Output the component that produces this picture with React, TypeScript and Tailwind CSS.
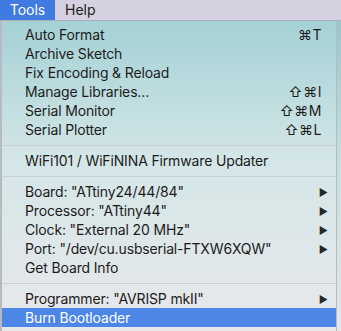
import React from 'react';

type Item =
  | { kind: 'item'; label: string; shortcut?: string; submenu?: boolean; active?: boolean }
  | { kind: 'sep' };

const items: Item[] = [
  { kind: 'item', label: 'Auto Format', shortcut: '⌘T' },
  { kind: 'item', label: 'Archive Sketch' },
  { kind: 'item', label: 'Fix Encoding & Reload' },
  { kind: 'item', label: 'Manage Libraries...', shortcut: '⇧⌘I' },
  { kind: 'item', label: 'Serial Monitor', shortcut: '⇧⌘M' },
  { kind: 'item', label: 'Serial Plotter', shortcut: '⇧⌘L' },
  { kind: 'sep' },
  { kind: 'item', label: 'WiFi101 / WiFiNINA Firmware Updater' },
  { kind: 'sep' },
  { kind: 'item', label: 'Board: "ATtiny24/44/84"', submenu: true },
  { kind: 'item', label: 'Processor: "ATtiny44"', submenu: true },
  { kind: 'item', label: 'Clock: "External 20 MHz"', submenu: true },
  { kind: 'item', label: 'Port: "/dev/cu.usbserial-FTXW6XQW"', submenu: true },
  { kind: 'item', label: 'Get Board Info' },
  { kind: 'sep' },
  { kind: 'item', label: 'Programmer: "AVRISP mkII"', submenu: true },
  { kind: 'item', label: 'Burn Bootloader', active: true },
];

function MenuRow({ item }: { item: Item }) {
  if (item.kind === 'sep') {
    return (
      <div className="h-[12px] flex items-center">
        <div className="h-px w-full bg-[#c9cfd2]" />
      </div>
    );
  }
  return (
    <div
      className={`h-[19px] flex items-center pl-[23px] pr-[14px] ${
        item.active ? 'bg-[#4c86e6] text-white' : 'text-[#1c1c1c]'
      }`}
    >
      <span className="flex-1 tracking-[-0.15px]">{item.label}</span>
      {item.shortcut && <span className="tracking-[0.5px]">{item.shortcut}</span>}
      {item.submenu && <span className="text-[10px] text-[#262626] mr-[-6px]">▶</span>}
    </div>
  );
}

export default function App() {
  return (
    <div
      className="w-[341px] h-[331px] overflow-hidden bg-gradient-to-b from-[#8fc4c8] via-[#c8dfe0] to-[#e4e6e8] text-[14px] leading-none"
      style={{ fontFamily: 'Inter, "Liberation Sans", sans-serif' }}
    >
      {/* Menu bar */}
      <div className="h-[21px] flex items-stretch bg-[#d6d1e0] border-b border-[#a9b0b6]">
        <div className="w-[55px] flex items-center justify-center bg-[#3f7be0] text-white">Tools</div>
        <div className="flex items-center pl-[10px] text-[#1c1c1c]">Help</div>
      </div>

      {/* Dropdown */}
      <div className="w-[337px] h-[310px] pt-[4px] border-l-2 border-r border-[#b4bcc0] bg-gradient-to-b from-[#a4d1d5] via-[#d4e6e8] via-45% to-[#e8e8ea]">
        {items.map((it, i) => (
          <MenuRow key={i} item={it} />
        ))}
      </div>
    </div>
  );
}
